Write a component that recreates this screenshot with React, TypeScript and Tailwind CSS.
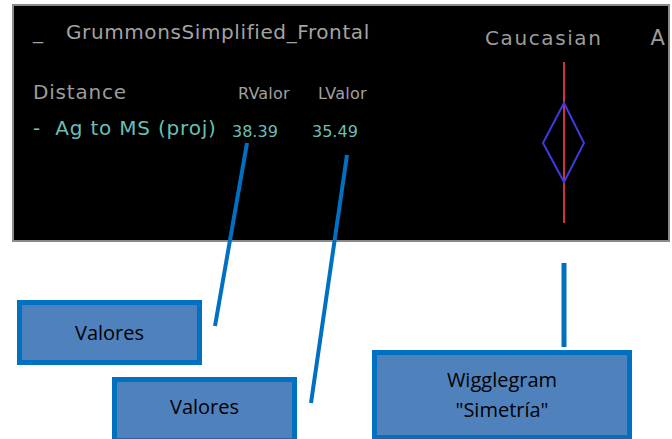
import React from 'react';

const gothic = { fontFamily: '"DejaVu Sans", "Liberation Sans", sans-serif' };

// callout boxes laid on the free canvas under the capture
const callouts = [
  { key: 'r', lines: ['Valores'], cls: 'left-[17px] top-[300px] w-[185px] h-[65px]' },
  { key: 'l', lines: ['Valores'], cls: 'left-[112px] top-[377px] w-[185px] h-[66px] pb-[6px]' },
  { key: 'w', lines: ['Wigglegram', '"Simetría"'], cls: 'left-[372px] top-[350px] w-[260px] h-[90px]' },
];

function Wiggle() {
  return (
    <svg width="60" height="180" viewBox="0 0 60 180" className="ml-[83px] block">
      <line x1="30" y1="12" x2="30" y2="173" stroke="#d2323c" strokeWidth="2" />
      <polygon points="30,53 50,93 30,132 9,93" fill="none" stroke="#3b3be0" strokeWidth="2" />
    </svg>
  );
}

export default function App() {
  return (
    <div className="relative w-[672px] h-[439px] overflow-hidden bg-white">
      {/* captura del programa */}
      <div className="ml-[12px] mt-[4px] w-[658px] h-[238px] border-2 border-[#8a8a8a] bg-black flex overflow-hidden" style={gothic}>
        <div className="w-[437px] shrink-0 pl-[19px] pt-[14px]">
          <div className="flex items-baseline text-[20px] leading-[24px] text-[#a3a3a3]">
            <span className="w-[33px]">_</span>
            <span className="tracking-[0.6px]">GrummonsSimplified_Frontal</span>
          </div>

          <div className="mt-[36px] grid grid-cols-[199px_80px_80px] items-baseline leading-[24px]">
            <span className="text-[20px] text-[#9c9c9c] tracking-[0.8px]">Distance</span>
            <span className="ml-[6px] text-[16px] text-[#a0a0a0] tracking-[0.2px]">RValor</span>
            <span className="ml-[6px] text-[16px] text-[#a0a0a0] tracking-[0.2px]">LValor</span>
          </div>

          <div className="mt-[10px] grid grid-cols-[199px_80px_80px] items-baseline leading-[24px] text-[#6bbfb4]">
            <span className="text-[20px] whitespace-pre tracking-[0.8px]">-  Ag to MS (proj)</span>
            <span className="text-[16px] relative top-[2px]">38.39</span>
            <span className="text-[16px] relative top-[2px]">35.49</span>
          </div>
        </div>

        <div className="flex-1 min-w-0">
          <div className="flex items-baseline pt-[20px] pl-[34px] text-[20px] leading-[24px] text-[#9c9c9c] whitespace-nowrap">
            <span className="tracking-[1.6px]">Caucasian</span>
            <span className="ml-[48px] text-[21px]">A</span>
          </div>
          <Wiggle />
        </div>
      </div>

      {/* líneas guía */}
      <svg className="absolute inset-0 pointer-events-none" width="672" height="439" viewBox="0 0 672 439">
        <line x1="247" y1="143" x2="215" y2="326" stroke="#0070c0" strokeWidth="4" />
        <line x1="347" y1="155" x2="311" y2="403" stroke="#0070c0" strokeWidth="4" />
        <line x1="564" y1="263" x2="564" y2="347" stroke="#0070c0" strokeWidth="5" />
      </svg>

      {callouts.map((c) => (
        <div
          key={c.key}
          className={`absolute ${c.cls} border-[5px] border-[#0070c0] bg-[#4f81bd] flex flex-col items-center justify-center text-[20px] leading-[30px] text-black`}
          style={{ fontFamily: '"Open Sans", "Noto Sans", sans-serif' }}
        >
          {c.lines.map((l) => (
            <span key={l}>{l}</span>
          ))}
        </div>
      ))}
    </div>
  );
}
